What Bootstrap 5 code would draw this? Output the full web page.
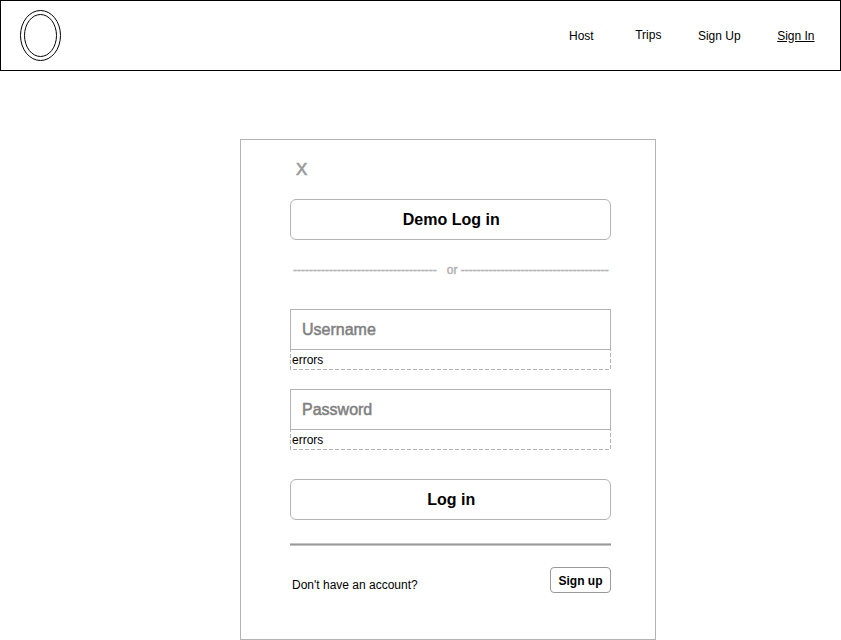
<!DOCTYPE html>
<html lang="en">
<head>
<meta charset="utf-8">
<meta name="viewport" content="width=device-width, initial-scale=1">
<title>Sign In</title>
<link href="https://cdn.jsdelivr.net/npm/bootstrap@5.3.0/dist/css/bootstrap.min.css" rel="stylesheet">
<style>
  body { font-family: "Liberation Sans", Arial, sans-serif; font-size: 12px; line-height: 14px; color: #000; background: #fff; }
  .topbar { height: 71px; border: 1px solid #000; padding: 0 25px 0 19px; }
  .topbar .nav-link { color: #000; padding: 0; line-height: 14px; white-space: nowrap; }
  .topbar .menu-host { margin-right: 41.5px; }
  .topbar .menu-trips { margin-right: 36.5px; padding-bottom: 2px; }
  .topbar .menu-signup { margin-right: 36.5px; }
  .topbar .menu-signin { margin-right: .5px; }
  .login-panel { width: 416px; height: 501px; margin: 68px 0 0 240px; border: 1px solid #b3b3b3; border-radius: 0; padding: 20px 44px 0 49px; }
  .dismiss { color: #999; font-size: 17px; line-height: 20px; margin: 0 0 19px 6px; background: none; border: 0; padding: 0; -webkit-text-stroke: .6px #999; }
  .btn-wide { height: 41px; border: 1px solid #b3b3b3; border-radius: 6px; font-size: 16px; line-height: 19px; font-weight: 700; color: #000; padding: 0 0 0 1.5px; }
  .or-line { color: #b3b3b3; margin: 23px 0 32px 3px; line-height: 14px; white-space: pre; -webkit-text-stroke: .5px #b3b3b3; }
  .entry { height: 41px; border: 1px solid #b3b3b3; border-radius: 0; font-size: 16px; line-height: 19px; color: #000; padding: 0 11px; }
  .entry::placeholder { color: #808080; opacity: 1; -webkit-text-stroke: .5px #808080; }
  .problem { height: 20px; padding: 3px 0 0 2px; margin-bottom: 19px; }
  .problem-last { margin-bottom: 29px; }
  .problem svg { left: 0; top: -1px; }
  .rule { height: 3px; margin: 23px 0 21px; background: linear-gradient(#c4c4c4 1px, #999 1px 2px, #c4c4c4 2px); }
  .account-note { padding: 11px 0 0 2px; }
  .btn-small { width: 61px; height: 26px; border: 1px solid #999; border-radius: 4px; font-size: 12px; line-height: 14px; font-weight: 700; color: #000; padding: 1px 0 0; }
</style>
</head>
<body>
<nav class="topbar d-flex align-items-center justify-content-between">
  <a href="#" aria-label="Home" class="d-flex">
    <svg width="42" height="52" viewBox="0 0 42 52" fill="none" stroke="#000"><ellipse cx="20.5" cy="25.5" rx="20" ry="25"/><ellipse cx="20.5" cy="25.5" rx="16" ry="21"/></svg>
  </a>
  <div class="d-flex align-items-center">
    <a class="nav-link menu-host" href="#">Host</a>
    <a class="nav-link menu-trips" href="#">Trips</a>
    <a class="nav-link menu-signup" href="#">Sign Up</a>
    <a class="nav-link menu-signin text-decoration-underline" href="#">Sign In</a>
  </div>
</nav>
<main class="login-panel card">
  <div class="d-flex"><button type="button" class="dismiss">X</button></div>
  <button type="button" class="btn btn-wide w-100">Demo Log in</button>
  <div class="or-line">------------------------------------&nbsp; &nbsp;or -------------------------------------</div>
  <form class="d-flex flex-column">
    <input class="form-control entry" type="text" placeholder="Username">
    <div class="problem position-relative">errors<svg class="position-absolute" width="321" height="21" fill="none" stroke="#b3b3b3"><rect x=".5" y=".5" width="320" height="20" stroke-dasharray="4 2" stroke-dashoffset=".5"/></svg></div>
    <input class="form-control entry" type="password" placeholder="Password">
    <div class="problem problem-last position-relative">errors<svg class="position-absolute" width="321" height="21" fill="none" stroke="#b3b3b3"><rect x=".5" y=".5" width="320" height="20" stroke-dasharray="4 2" stroke-dashoffset=".5"/></svg></div>
    <button type="button" class="btn btn-wide w-100">Log in</button>
  </form>
  <div class="rule"></div>
  <div class="d-flex justify-content-between"><span class="account-note">Don't have an account?</span><button type="button" class="btn btn-small">Sign up</button></div>
</main>
</body>
</html>
